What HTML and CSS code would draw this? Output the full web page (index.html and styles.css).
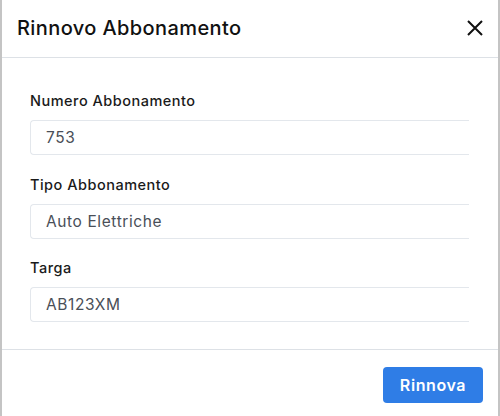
FILE: index.html
```html
<!DOCTYPE html>
<html lang="it">
<head>
<meta charset="utf-8">
<title>Rinnovo Abbonamento</title>
<link rel="stylesheet" href="styles.css">
</head>
<body>
<div class="modal">
  <div class="modal-header">
    <h1 class="modal-title">Rinnovo Abbonamento</h1>
    <button class="close" aria-label="Chiudi">
      <svg width="18" height="18" viewBox="0 0 18 18"><path d="M2 2 L16 16 M16 2 L2 16" stroke="#111" stroke-width="2" fill="none"/></svg>
    </button>
  </div>
  <div class="modal-body">
    <div class="field">
      <label class="label">Numero Abbonamento</label>
      <div class="input">753</div>
    </div>
    <div class="field">
      <label class="label">Tipo Abbonamento</label>
      <div class="input">Auto Elettriche</div>
    </div>
    <div class="field">
      <label class="label">Targa</label>
      <div class="input">AB123XM</div>
    </div>
  </div>
  <div class="modal-footer">
    <button class="btn-primary">Rinnova</button>
  </div>
</div>
</body>
</html>
```
FILE: styles.css
```css
html, body {
  margin: 0;
  padding: 0;
  background: #ffffff;
}
body {
  font-family: Inter, "Open Sans", sans-serif;
  color: #111;
}
.modal {
  width: 500px;
  height: 416px;
  box-sizing: border-box;
  border-left: 2px solid #c4c4c4;
  border-right: 2px solid #c4c4c4;
  display: flex;
  flex-direction: column;
  overflow: hidden;
}
.modal-header {
  height: 58px;
  box-sizing: border-box;
  border-bottom: 1px solid #dde1e6;
  display: flex;
  align-items: center;
  justify-content: space-between;
  padding: 0 14px 2px 15px;
}
.modal-title {
  margin: 0;
  font-size: 20px;
  font-weight: 500;
  color: #111;
  letter-spacing: 0.4px;
}
.close {
  border: none;
  background: none;
  padding: 0;
  width: 18px;
  height: 18px;
  display: flex;
  cursor: pointer;
}
.modal-body {
  height: 292px;
  box-sizing: border-box;
  padding: 34px 0 0 28px;
  border-bottom: 1px solid #dde1e6;
}
.field {
  margin-bottom: 20.5px;
}
.label {
  display: block;
  font-size: 14.5px;
  font-weight: 500;
  color: #1a1a1a;
  line-height: 18px;
  margin-bottom: 10px;
  letter-spacing: 0.5px;
}
.input {
  height: 35px;
  box-sizing: border-box;
  margin-right: 29px;
  border: 1px solid #e3e7ec;
  border-right: none;
  border-radius: 4px 0 0 4px;
  padding-left: 15px;
  display: flex;
  align-items: center;
  font-size: 15.5px;
  letter-spacing: 0.6px;
  color: #4a4f58;
}
.modal-footer {
  flex: 1;
  display: flex;
  justify-content: flex-end;
  align-items: flex-start;
  padding: 17px 15px 0 0;
}
.btn-primary {
  width: 100px;
  height: 36px;
  border: none;
  border-radius: 4px;
  background: #2f7de6;
  color: #fff;
  font-family: Inter, "Open Sans", sans-serif;
  font-size: 16px;
  font-weight: 600;
  letter-spacing: 0.6px;
  cursor: pointer;
}
```
